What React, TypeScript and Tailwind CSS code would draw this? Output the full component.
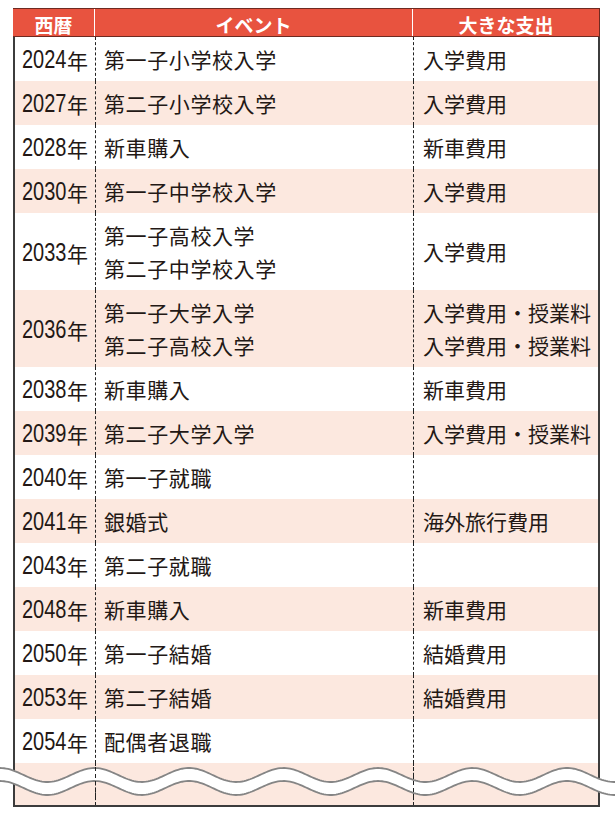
import React from "react";

type Row = {
  year: string;
  events: string[];
  costs: string[];
};

const rows: Row[] = [
  { year: "2024", events: ["第一子小学校入学"], costs: ["入学費用"] },
  { year: "2027", events: ["第二子小学校入学"], costs: ["入学費用"] },
  { year: "2028", events: ["新車購入"], costs: ["新車費用"] },
  { year: "2030", events: ["第一子中学校入学"], costs: ["入学費用"] },
  { year: "2033", events: ["第一子高校入学", "第二子中学校入学"], costs: ["入学費用"] },
  { year: "2036", events: ["第一子大学入学", "第二子高校入学"], costs: ["入学費用・授業料", "入学費用・授業料"] },
  { year: "2038", events: ["新車購入"], costs: ["新車費用"] },
  { year: "2039", events: ["第二子大学入学"], costs: ["入学費用・授業料"] },
  { year: "2040", events: ["第一子就職"], costs: [] },
  { year: "2041", events: ["銀婚式"], costs: ["海外旅行費用"] },
  { year: "2043", events: ["第二子就職"], costs: [] },
  { year: "2048", events: ["新車購入"], costs: ["新車費用"] },
  { year: "2050", events: ["第一子結婚"], costs: ["結婚費用"] },
  { year: "2053", events: ["第二子結婚"], costs: ["結婚費用"] },
  { year: "2054", events: ["配偶者退職"], costs: [] },
];

const jp = { fontFamily: "'Noto Sans CJK JP', 'Noto Sans', sans-serif" };
const latin = { fontFamily: "'Liberation Sans', Arial, sans-serif" };

// wave line y at x (crest at x = 0)
function waveY(x: number, mid: number) {
  const period = 94.5;
  return mid - 7 * Math.cos((2 * Math.PI * x) / period);
}

function Wave() {
  const pts = (mid: number) => {
    const out: string[] = [];
    for (let x = -2; x <= 617; x += 2) out.push(`${x},${waveY(x, mid).toFixed(2)}`);
    return out;
  };
  const top = pts(15);
  const bottom = pts(28);
  const fill = `M${top.join(" L")} L${bottom.slice().reverse().join(" L")} Z`;
  return (
    <svg className="absolute left-0 top-[760px]" width="615" height="42" viewBox="0 0 615 42">
      <path d={fill} fill="#fff" />
      <path d={`M${top.join(" L")}`} fill="none" stroke="#858585" strokeWidth="1.8" />
      <path d={`M${bottom.join(" L")}`} fill="none" stroke="#858585" strokeWidth="1.8" />
      <line x1="95.5" y1="0" x2="95.5" y2="42" stroke="#222" strokeWidth="1" strokeDasharray="4 3" />
      <line x1="413.5" y1="0" x2="413.5" y2="42" stroke="#222" strokeWidth="1" strokeDasharray="4 3" />
    </svg>
  );
}

// condensed digits: Arial-width digits squeezed horizontally
function Year({ y }: { y: string }) {
  return (
    <>
      <span className="inline-block w-[45px] whitespace-nowrap">
        <span className="inline-block origin-left scale-x-[0.8] text-[25px] leading-none" style={latin}>
          {y}
        </span>
      </span>
      <span className="text-[21px] leading-none" style={jp}>年</span>
    </>
  );
}

export default function App() {
  return (
    <div className="relative w-[615px] h-[819px] overflow-hidden bg-white text-[#231815]">
      <div className="ml-[13px] pt-[8px] w-[587px]">
        {/* Header */}
        <div
          className="flex h-[29px] bg-[#e8533f] border-y border-r border-[#6e2a21] text-white font-bold text-[19px] leading-none"
          style={jp}
        >
          <div className="w-[82px] flex items-center justify-center pt-[3px] border-r border-white">西暦</div>
          <div className="w-[318px] flex items-center justify-center pt-[3px] border-r border-white">イベント</div>
          <div className="flex-1 flex items-center justify-center pt-[3px]">大きな支出</div>
        </div>

        {/* Body */}
        <div className="border-x-2 border-b-2 border-[#3c3c3c]">
          {rows.map((r, i) => {
            const lines = Math.max(r.events.length, r.costs.length, 1);
            return (
              <div
                key={r.year}
                className={`flex ${lines > 1 ? "h-[77px]" : "h-[44px]"} ${i % 2 === 1 ? "bg-[#fce8df]" : "bg-white"}`}
              >
                <div className="w-[80px] flex items-center justify-center pt-[3px]">
                  <Year y={r.year} />
                </div>
                <div
                  className="w-[318px] flex flex-col justify-center pl-[8px] border-l border-dashed border-[#222] text-[21px] leading-[33px] tracking-[0.6px]"
                  style={jp}
                >
                  {r.events.map((e) => (
                    <div key={e}>{e}</div>
                  ))}
                </div>
                <div
                  className="flex-1 flex flex-col justify-center pl-[9px] border-l border-dashed border-[#222] text-[21px] leading-[33px]"
                  style={jp}
                >
                  {r.costs.map((c, k) => (
                    <div key={k}>{c}</div>
                  ))}
                </div>
              </div>
            );
          })}
          {/* trailing cut-off row */}
          <div className="flex h-[42px] bg-[#fce8df]">
            <div className="w-[80px]" />
            <div className="w-[318px] border-l border-dashed border-[#222]" />
            <div className="flex-1 border-l border-dashed border-[#222]" />
          </div>
        </div>
      </div>
      <Wave />
    </div>
  );
}
